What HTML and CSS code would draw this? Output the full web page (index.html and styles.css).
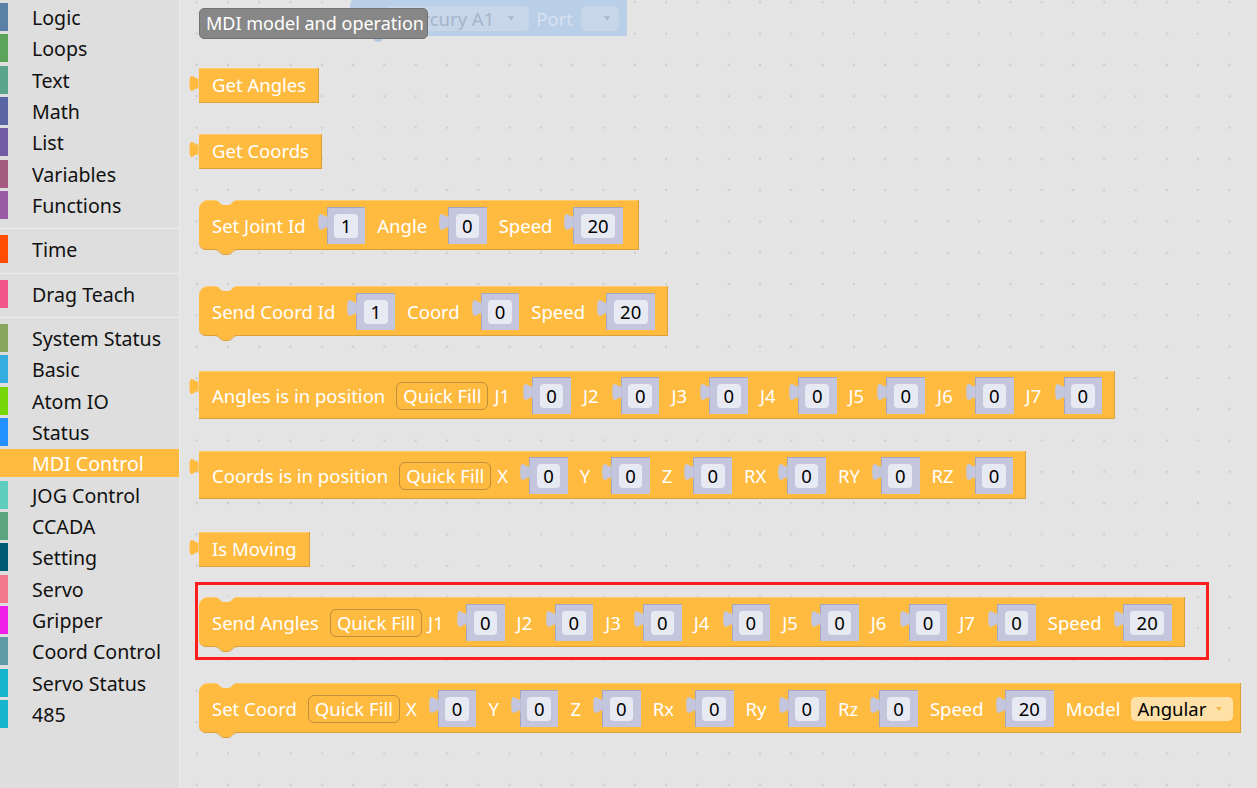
FILE: index.html
```html
<!DOCTYPE html>
<html>
<head>
<meta charset="utf-8">
<link rel="stylesheet" href="styles.css">
</head>
<body>
<svg class="defs" width="0" height="0">
  <symbol id="tab" viewBox="0 0 8 15"><path d="M8 0C8 10 0-8 0 7.5C0 23 8 5 8 15Z"/></symbol>
  <symbol id="notch" viewBox="0 0 22 6"><path d="M0 0C4 0 5 5 9 5H13C17 5 18 0 22 0Z"/></symbol>
  <symbol id="ntab" viewBox="0 0 22 6"><path fill="#ffbb40" d="M0 0H22C18 0 17 5 13 5H9C5 5 4 0 0 0Z"/><path fill="none" stroke="#dca03a" stroke-width="1" d="M0 .5C4 .5 5 5.5 9 5.5H13C17 5.5 18 .5 22 .5"/></symbol>
</svg>
<div class="app">
  <nav class="toolbox">
    <div class="cat c-logic">Logic</div>
    <div class="cat c-loops">Loops</div>
    <div class="cat c-text">Text</div>
    <div class="cat c-math">Math</div>
    <div class="cat c-list">List</div>
    <div class="cat c-vars">Variables</div>
    <div class="cat c-func">Functions</div>
    <div class="sep"></div>
    <div class="cat c-time">Time</div>
    <div class="sep"></div>
    <div class="cat c-drag">Drag Teach</div>
    <div class="sep"></div>
    <div class="cat c-sys">System Status</div>
    <div class="cat c-basic">Basic</div>
    <div class="cat c-atom">Atom IO</div>
    <div class="cat c-status">Status</div>
    <div class="cat c-mdi sel">MDI Control</div>
    <div class="cat c-jog">JOG Control</div>
    <div class="cat c-ccada">CCADA</div>
    <div class="cat c-set">Setting</div>
    <div class="cat c-servo">Servo</div>
    <div class="cat c-grip">Gripper</div>
    <div class="cat c-coord">Coord Control</div>
    <div class="cat c-sstat">Servo Status</div>
    <div class="cat c-485">485</div>
  </nav>

  <main class="ws">
    <div class="blue">
      <span class="bdd"><span>Mercury A1</span><i class="barr"></i></span>
      <span class="blbl">Port</span>
      <span class="bdd empty"><i class="barr"></i></span>
    </div>
    <div class="blue-nub"></div>
    <div class="tooltip">MDI model and operation</div>

    <div class="block out simple b-ga"><svg class="otab"><use href="#tab"/></svg><span class="lbl head">Get Angles</span></div>

    <div class="block out simple b-gc"><svg class="otab"><use href="#tab"/></svg><span class="lbl head">Get Coords</span></div>

    <div class="block stmt b-sj">
      <svg class="notch"><use href="#notch"/></svg><svg class="ntab"><use href="#ntab"/></svg>
      <span class="lbl head">Set Joint Id</span>
      <span class="sock"><svg class="stab"><use href="#tab"/></svg><span class="fld">1</span></span>
      <span class="lbl">Angle</span>
      <span class="sock"><svg class="stab"><use href="#tab"/></svg><span class="fld">0</span></span>
      <span class="lbl">Speed</span>
      <span class="sock"><svg class="stab"><use href="#tab"/></svg><span class="fld">20</span></span>
    </div>

    <div class="block stmt b-sc">
      <svg class="notch"><use href="#notch"/></svg><svg class="ntab"><use href="#ntab"/></svg>
      <span class="lbl head">Send Coord Id</span>
      <span class="sock"><svg class="stab"><use href="#tab"/></svg><span class="fld">1</span></span>
      <span class="lbl">Coord</span>
      <span class="sock"><svg class="stab"><use href="#tab"/></svg><span class="fld">0</span></span>
      <span class="lbl">Speed</span>
      <span class="sock"><svg class="stab"><use href="#tab"/></svg><span class="fld">20</span></span>
    </div>

    <div class="block out inp b-aip">
      <svg class="otab"><use href="#tab"/></svg>
      <span class="lbl head">Angles is in position</span>
      <span class="qf">Quick Fill</span>
      <span class="lbl j">J1</span><span class="sock"><svg class="stab"><use href="#tab"/></svg><span class="fld">0</span></span>
      <span class="lbl j">J2</span><span class="sock"><svg class="stab"><use href="#tab"/></svg><span class="fld">0</span></span>
      <span class="lbl j">J3</span><span class="sock"><svg class="stab"><use href="#tab"/></svg><span class="fld">0</span></span>
      <span class="lbl j">J4</span><span class="sock"><svg class="stab"><use href="#tab"/></svg><span class="fld">0</span></span>
      <span class="lbl j">J5</span><span class="sock"><svg class="stab"><use href="#tab"/></svg><span class="fld">0</span></span>
      <span class="lbl j">J6</span><span class="sock"><svg class="stab"><use href="#tab"/></svg><span class="fld">0</span></span>
      <span class="lbl j">J7</span><span class="sock"><svg class="stab"><use href="#tab"/></svg><span class="fld">0</span></span>
    </div>

    <div class="block out inp b-cip">
      <svg class="otab"><use href="#tab"/></svg>
      <span class="lbl head">Coords is in position</span>
      <span class="qf">Quick Fill</span>
      <span class="lbl">X</span><span class="sock"><svg class="stab"><use href="#tab"/></svg><span class="fld">0</span></span>
      <span class="lbl">Y</span><span class="sock"><svg class="stab"><use href="#tab"/></svg><span class="fld">0</span></span>
      <span class="lbl">Z</span><span class="sock"><svg class="stab"><use href="#tab"/></svg><span class="fld">0</span></span>
      <span class="lbl">RX</span><span class="sock"><svg class="stab"><use href="#tab"/></svg><span class="fld">0</span></span>
      <span class="lbl">RY</span><span class="sock"><svg class="stab"><use href="#tab"/></svg><span class="fld">0</span></span>
      <span class="lbl">RZ</span><span class="sock"><svg class="stab"><use href="#tab"/></svg><span class="fld">0</span></span>
    </div>

    <div class="block out simple b-im"><svg class="otab"><use href="#tab"/></svg><span class="lbl head">Is Moving</span></div>

    <div class="block stmt b-sa">
      <svg class="notch"><use href="#notch"/></svg><svg class="ntab"><use href="#ntab"/></svg>
      <span class="lbl head">Send Angles</span>
      <span class="qf">Quick Fill</span>
      <span class="lbl j">J1</span><span class="sock"><svg class="stab"><use href="#tab"/></svg><span class="fld">0</span></span>
      <span class="lbl j">J2</span><span class="sock"><svg class="stab"><use href="#tab"/></svg><span class="fld">0</span></span>
      <span class="lbl j">J3</span><span class="sock"><svg class="stab"><use href="#tab"/></svg><span class="fld">0</span></span>
      <span class="lbl j">J4</span><span class="sock"><svg class="stab"><use href="#tab"/></svg><span class="fld">0</span></span>
      <span class="lbl j">J5</span><span class="sock"><svg class="stab"><use href="#tab"/></svg><span class="fld">0</span></span>
      <span class="lbl j">J6</span><span class="sock"><svg class="stab"><use href="#tab"/></svg><span class="fld">0</span></span>
      <span class="lbl j">J7</span><span class="sock"><svg class="stab"><use href="#tab"/></svg><span class="fld">0</span></span>
      <span class="lbl">Speed</span><span class="sock"><svg class="stab"><use href="#tab"/></svg><span class="fld">20</span></span>
    </div>

    <div class="block stmt b-scd">
      <svg class="notch"><use href="#notch"/></svg><svg class="ntab"><use href="#ntab"/></svg>
      <span class="lbl head">Set Coord</span>
      <span class="qf">Quick Fill</span>
      <span class="lbl">X</span><span class="sock"><svg class="stab"><use href="#tab"/></svg><span class="fld">0</span></span>
      <span class="lbl">Y</span><span class="sock"><svg class="stab"><use href="#tab"/></svg><span class="fld">0</span></span>
      <span class="lbl">Z</span><span class="sock"><svg class="stab"><use href="#tab"/></svg><span class="fld">0</span></span>
      <span class="lbl">Rx</span><span class="sock"><svg class="stab"><use href="#tab"/></svg><span class="fld">0</span></span>
      <span class="lbl">Ry</span><span class="sock"><svg class="stab"><use href="#tab"/></svg><span class="fld">0</span></span>
      <span class="lbl">Rz</span><span class="sock"><svg class="stab"><use href="#tab"/></svg><span class="fld">0</span></span>
      <span class="lbl">Speed</span><span class="sock"><svg class="stab"><use href="#tab"/></svg><span class="fld">20</span></span>
      <span class="lbl">Model</span>
      <span class="dd"><span>Angular</span><i class="darr"></i></span>
    </div>

    <div class="hl"></div>
  </main>
</div>
</body>
</html>
```

FILE: styles.css
```css
* { box-sizing: border-box; }

html, body {
  margin: 0;
  padding: 0;
}

body {
  font-family: "Noto Sans", "Liberation Sans", sans-serif;
  overflow: hidden;
  background: #e4e4e4;
}

.defs {
  position: absolute;
  width: 0;
  height: 0;
  overflow: hidden;
}

.app {
  display: flex;
  width: 1257px;
  height: 788px;
}

/* ---------- toolbox ---------- */
.toolbox {
  width: 180px;
  flex: none;
  display: flex;
  flex-direction: column;
  background: #dedede;
  border-right: 1px solid #e9e9e9;
  padding-top: 3px;
}

.cat {
  height: 28px;
  margin-bottom: 3.33px;
  border-left: 8px solid #999;
  padding-left: 24px;
  font-size: 19.6px;
  line-height: 29px;
  color: #111;
  white-space: nowrap;
}

.sep {
  height: 1px;
  background: #ececec;
  margin: 6px 0;
  flex: none;
}

.c-logic { border-left-color: #5b80a5; }
.c-loops { border-left-color: #5ba55b; }
.c-text { border-left-color: #5ba58c; }
.c-math { border-left-color: #5b67a5; }
.c-list { border-left-color: #745ba5; }
.c-vars { border-left-color: #a55b80; }
.c-func { border-left-color: #995ba5; }
.c-time { border-left-color: #ff4d00; }
.c-drag { border-left-color: #f2558a; }
.c-sys { border-left-color: #88a65e; }
.c-basic { border-left-color: #35ade0; }
.c-atom { border-left-color: #76d607; }
.c-status { border-left-color: #2290fe; }
.c-mdi { border-left-color: #ffbb40; }
.c-jog { border-left-color: #5ecdbe; }
.c-ccada { border-left-color: #5ba57f; }
.c-set { border-left-color: #005b74; }
.c-servo { border-left-color: #f2798c; }
.c-grip { border-left-color: #ee20e8; }
.c-coord { border-left-color: #5e9aa5; }
.c-sstat { border-left-color: #14b5cd; }
.c-485 { border-left-color: #14b5cd; }

.cat.sel {
  background: #ffbb40;
  color: #fff;
}

/* ---------- workspace ---------- */
.ws {
  position: relative;
  flex: 1;
  overflow: hidden;
  background-color: #e4e4e4;
  background-image: radial-gradient(circle at center, #cdcdcd 0, #cdcdcd 1px, rgba(205,205,205,0) 1.6px);
  background-size: 31.3px 31.3px;
  background-position: 1px 18px;
}

/* faded blue block at the top */
.blue {
  position: absolute;
  left: 170px;
  top: -4px;
  width: 277px;
  height: 40px;
  background: #b9cee7;
  border-radius: 10px 0 0 0;
  display: flex;
  justify-content: flex-end;
  align-items: flex-start;
  padding: 10px 8px 0 0;
  font-size: 18.5px;
  white-space: nowrap;
}

.bdd {
  height: 25px;
  display: flex;
  align-items: center;
  background: #c8d6ea;
  border-radius: 5px;
  padding: 0 15px 0 8px;
  color: #a5b5ca;
  line-height: 25px;
}

.bdd.empty {
  width: 38px;
  justify-content: flex-end;
  padding-right: 9px;
}

.barr {
  display: block;
  margin-left: 14px;
  width: 0;
  height: 0;
  border-left: 3px solid transparent;
  border-right: 3px solid transparent;
  border-top: 5px solid #abbbd0;
}

.blbl {
  color: #d8e1ee;
  margin: 0 8px 0 7px;
  line-height: 25px;
}

.blue-nub {
  position: absolute;
  left: 192px;
  top: 30px;
  width: 12px;
  height: 12px;
  border-radius: 50%;
  background: #b3c9e4;
}

.tooltip {
  position: absolute;
  left: 19px;
  top: 8px;
  width: 229px;
  height: 31px;
  background: #878787;
  border: 1px solid #727272;
  border-radius: 5px;
  color: #fff;
  font-size: 18px;
  line-height: 29px;
  padding: 0 6px;
  white-space: nowrap;
  z-index: 5;
}

/* ---------- blocks ---------- */
.block {
  position: absolute;
  left: 19px;
  display: flex;
  align-items: center;
  background: #ffbb40;
  color: #fff;
  font-size: 18.5px;
  line-height: 24px;
  white-space: nowrap;
  padding: 7px 12px 5px 13px;
  border-right: 1px solid #dca03a;
  border-bottom: 1px solid #dca03a;
  box-shadow: inset 0 1px 0 #ffcb6c;
}

.block.simple {
  padding: 0 12px 0 13px;
  height: 35px;
}

.block.inp {
  padding: 6px 12px 4px 13px;
}

.block.stmt {
  border-radius: 9px 0 0 7px;
}

.b-ga { top: 68px; }
.b-gc { top: 134px; height: 36px; }
.b-sj { top: 200px; padding-right: 15px; }
.b-sc { top: 286px; }
.b-aip { top: 371px; }
.b-cip { top: 451px; }
.b-im { top: 532px; height: 34px; }
.b-sa { top: 597px; }
.b-scd { top: 683px; padding-right: 7px; }

.otab {
  position: absolute;
  left: -10px;
  top: 7px;
  width: 10px;
  height: 17px;
  fill: #ffbb40;
  overflow: visible;
}

.notch {
  position: absolute;
  left: 16px;
  top: 0;
  width: 22px;
  height: 6px;
  fill: #e4e4e4;
}

.ntab {
  position: absolute;
  left: 16px;
  bottom: -6px;
  width: 22px;
  height: 6px;
  overflow: visible;
}

.lbl {
  margin-left: 12px;
}

.lbl.head {
  margin-left: 0;
}

.lbl.j {
  margin-right: 1.3px;
}

.qf {
  margin-left: 11px;
  height: 28px;
  line-height: 26px;
  padding: 0 6px;
  border: 1px solid #c08e3c;
  border-radius: 6px;
}

.qf + .lbl {
  margin-left: 6px;
}

.sock {
  position: relative;
  display: flex;
  margin-left: 21px;
  padding: 6px 7.5px 6px 6.5px;
  background: #c3c6dc;
  border-top: 1px solid #a3a6be;
  border-left: 1px solid #a3a6be;
}

.stab {
  position: absolute;
  left: -10px;
  top: 5px;
  width: 10px;
  height: 18px;
  fill: #c3c6dc;
  overflow: visible;
}

.fld {
  min-width: 23px;
  height: 24px;
  padding: 0 6.5px;
  border-radius: 4px;
  background: #e8eaf3;
  color: #000;
  text-align: center;
  line-height: 24px;
}

.dd {
  margin-left: 11px;
  height: 24px;
  display: flex;
  align-items: center;
  background: #ffe1a8;
  color: #000;
  border-radius: 5px;
  padding: 0 11px 0 6px;
}

.darr {
  display: block;
  margin-left: 10px;
  width: 0;
  height: 0;
  border-left: 3px solid transparent;
  border-right: 3px solid transparent;
  border-top: 4px solid #f4b74c;
}

.hl {
  position: absolute;
  left: 15px;
  top: 582px;
  width: 1014px;
  height: 78px;
  border: 3px solid #ff1e1e;
  pointer-events: none;
}
```
